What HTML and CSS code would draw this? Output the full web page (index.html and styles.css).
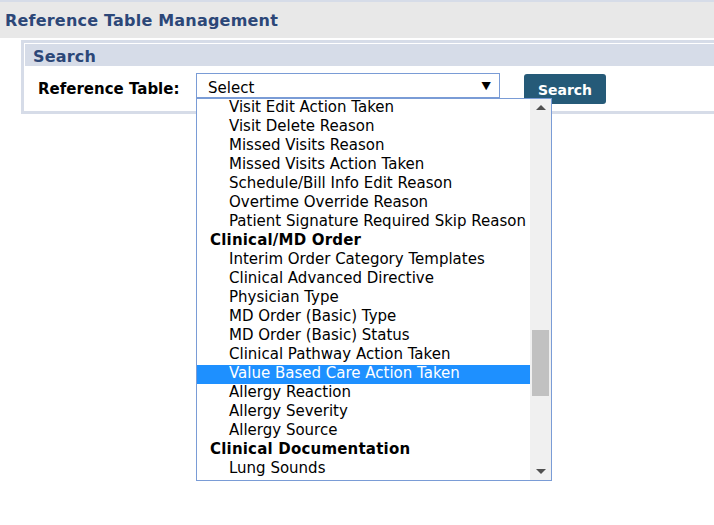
FILE: index.html
```html
<!DOCTYPE html>
<html>
<head>
<meta charset="utf-8">
<link rel="stylesheet" href="styles.css">
</head>
<body>
<div class="page">
  <div class="topline"></div>
  <div class="titlebar">Reference Table Management</div>
  <div class="searchbox">
    <div class="searchhead">Search</div>
    <div class="searchrow">
      <div class="label">Reference Table:</div>
      <div class="selectwrap">
        <div class="select">
          <span class="selval">Select</span>
          <span class="caret">&#9660;</span>
        </div>
        <div class="dropdown">
          <div class="list">
            <div class="opt">Visit Edit Action Taken</div>
            <div class="opt">Visit Delete Reason</div>
            <div class="opt">Missed Visits Reason</div>
            <div class="opt">Missed Visits Action Taken</div>
            <div class="opt">Schedule/Bill Info Edit Reason</div>
            <div class="opt">Overtime Override Reason</div>
            <div class="opt">Patient Signature Required Skip Reason</div>
            <div class="grp">Clinical/MD Order</div>
            <div class="opt">Interim Order Category Templates</div>
            <div class="opt">Clinical Advanced Directive</div>
            <div class="opt">Physician Type</div>
            <div class="opt">MD Order (Basic) Type</div>
            <div class="opt">MD Order (Basic) Status</div>
            <div class="opt">Clinical Pathway Action Taken</div>
            <div class="opt selected">Value Based Care Action Taken</div>
            <div class="opt">Allergy Reaction</div>
            <div class="opt">Allergy Severity</div>
            <div class="opt">Allergy Source</div>
            <div class="grp">Clinical Documentation</div>
            <div class="opt">Lung Sounds</div>
          </div>
          <div class="scrollbar">
            <div class="arrow up"></div>
            <div class="track"><div class="thumb"></div></div>
            <div class="arrow down"></div>
          </div>
        </div>
      </div>
      <button class="btn">Search</button>
    </div>
  </div>
</div>
</body>
</html>
```
FILE: styles.css
```css
html, body {
  margin: 0;
  padding: 0;
  background: #ffffff;
  overflow: hidden;
}
body {
  font-family: "DejaVu Sans", Verdana, sans-serif;
  width: 714px;
  height: 525px;
}
.topline {
  height: 2px;
  background: #d6dce8;
}
.titlebar {
  height: 36px;
  background: #e8e8e8;
  color: #2c4778;
  font-weight: bold;
  font-size: 16px;
  line-height: 38px;
  padding-left: 5px;
  box-sizing: border-box;
  margin-bottom: 2px;
  letter-spacing: 0.2px;
}
.searchbox {
  margin-left: 21px;
  width: 720px;
  border: 3px solid #d6dce8;
  padding: 1px;
  box-sizing: border-box;
}
.searchhead {
  height: 22px;
  background: #d6dce8;
  color: #2c4778;
  font-weight: bold;
  font-size: 16px;
  line-height: 25px;
  padding-left: 8px;
  letter-spacing: 0.2px;
}
.searchrow {
  display: flex;
  align-items: flex-start;
  height: 44px;
  padding-top: 7px;
  padding-left: 13px;
  box-sizing: border-box;
}
.label {
  width: 158px;
  font-weight: bold;
  font-size: 15px;
  color: #000;
  line-height: 32px;
}
.selectwrap {
  position: relative;
  width: 304px;
}
.select {
  height: 25px;
  border: 1px solid #7a9cd6;
  box-sizing: border-box;
  display: flex;
  align-items: center;
  justify-content: space-between;
  padding: 4px 9px 0 11px;
  font-size: 15px;
  color: #000;
}
.caret {
  font-size: 11px;
  color: #000;
  margin-top: -5px;
  transform: scaleX(1.1);
}
.dropdown {
  position: absolute;
  top: 25px;
  left: 0;
  width: 356px;
  height: 383px;
  border: 1px solid #7a9cd6;
  box-sizing: border-box;
  background: #fff;
  display: flex;
  z-index: 5;
}
.list {
  flex: 1;
  overflow: hidden;
}
.opt, .grp {
  height: 19px;
  line-height: 17px;
  font-size: 15px;
  white-space: nowrap;
  color: #000;
}
.opt {
  padding-left: 32px;
}
.grp {
  padding-left: 13px;
  font-weight: bold;
  letter-spacing: 0.2px;
}
.opt.selected {
  background: #1e90ff;
  color: #fff;
}
.scrollbar {
  width: 21px;
  background: #f0f0f0;
  display: flex;
  flex-direction: column;
}
.arrow {
  height: 17px;
  position: relative;
}
.arrow::after {
  content: "";
  position: absolute;
  left: 6px;
  width: 0;
  height: 0;
  border-left: 5px solid transparent;
  border-right: 5px solid transparent;
}
.arrow.up::after {
  top: 6px;
  border-bottom: 5px solid #505050;
}
.arrow.down::after {
  top: 6px;
  border-top: 5px solid #505050;
}
.track {
  flex: 1;
  position: relative;
}
.thumb {
  position: absolute;
  left: 2px;
  right: 2px;
  top: 214px;
  height: 66px;
  background: #c1c1c1;
}
.btn {
  margin-left: 24px;
  margin-top: 1px;
  width: 82px;
  height: 30px;
  background: #255a78;
  color: #fff;
  border: none;
  border-radius: 3px;
  font-family: "DejaVu Sans", Verdana, sans-serif;
  font-weight: bold;
  font-size: 14px;
  padding: 0;
  line-height: 32px;
}
```
